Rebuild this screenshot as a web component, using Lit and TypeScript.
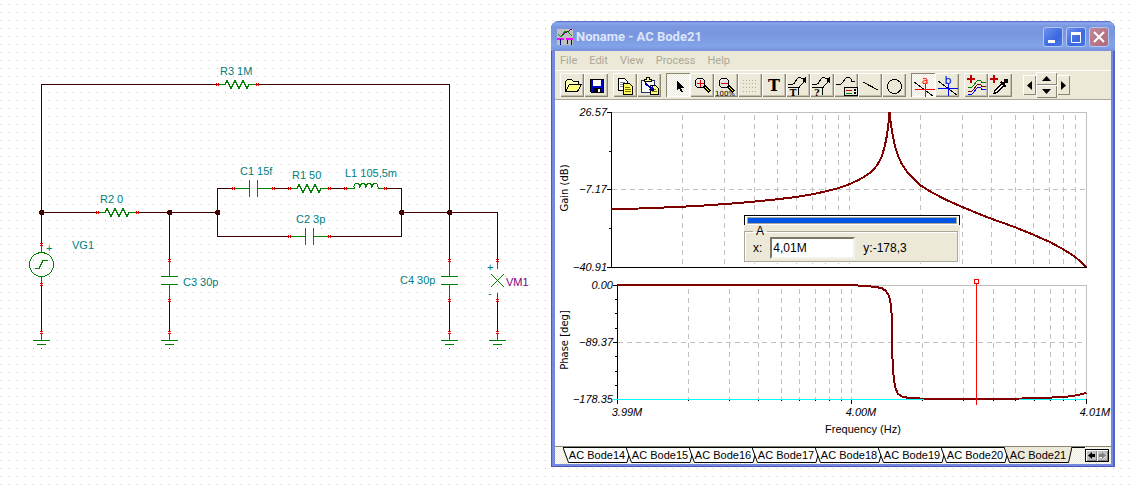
import { LitElement, html, svg, css } from "lit";
import { customElement } from "lit/decorators.js";
import { classMap } from "lit/directives/class-map.js";

/* ---------- Schematic ---------- */

const WIRES = [
  "M41.5 212V84.5H218", "M257 84.5H449.5V260", "M41.5 244V212.5H98", "M137 212.5H217.5V188.5H233",
  "M217.5 212V236.5H290", "M273 188.5H290", "M329 188.5H346", "M385 188.5H401.5V236.5H329",
  "M401.5 212.5H497.5V260", "M169.5 212V260", "M41.5 284V332", "M169.5 300V332", "M449.5 300V332", "M497.5 300V332",
];
const NODES = [[41, 212], [169, 212], [217, 212], [401, 212], [449, 212]];
const H_PINS = [[217, 84], [257, 84], [97, 212], [137, 212], [233, 188], [273, 188], [289, 188], [329, 188], [345, 188], [385, 188], [289, 236], [329, 236]];
const V_PINS = [[41, 244], [41, 284], [41, 332], [169, 260], [169, 300], [169, 332], [449, 260], [449, 300], [449, 332], [497, 260], [497, 300], [497, 332]];
const LABELS: [number, number, string][] = [
  [220, 75, "R3 1M"], [100, 203, "R2 0"], [240, 175, "C1 15f"], [292, 179, "R1 50"], [345, 177, "L1 105,5m"],
  [296, 223, "C2 3p"], [72, 249, "VG1"], [183, 286, "C3 30p"], [400, 284, "C4 30p"],
];

const resistor = (x: number, y: number) => svg`<path class="part" d="M${x} ${y + 0.5}h7l2 -4 4 8 4 -8 4 8 4 -8 4 8 2 -4h8"/>`;
const capH = (x: number, y: number) => svg`<path class="part" d="M${x} ${y + 0.5}h16.5m0 -8.500v17m8 -17v17m0 -8.500h16"/>`;
const capV = (x: number, y: number) => svg`<path class="part" d="M${x + 0.5} ${y}v16.5m-8.500 0h17m-17 8h17m-8.500 0v16"/>`;
const ground = (x: number) => svg`<path class="part" d="M${x + 0.5} 333v7.500m-8.500 0h17m-13 4h9m-5 4h1"/>`;

@customElement("circuit-schematic")
export class CircuitSchematic extends LitElement {
  static styles = css`
    :host { display: block; }
    svg { display: block; width: 100%; height: auto; shape-rendering: crispEdges; }
    .wire { fill: none; stroke: #400000; }
    .part { fill: none; stroke: #008000; }
    .pin { fill: none; stroke: #e00000; }
    .node { fill: #400000; }
    .label { font: 11px "Liberation Sans", Arial, sans-serif; fill: #008080; }
    .meter { fill: #800080; }
  `;
  render() {
    return html`<svg viewBox="0 0 540 360" role="img" aria-label="Crystal circuit schematic">
      ${WIRES.map((d) => svg`<path class="wire" d=${d}/>`)}
      ${resistor(218, 84)}${resistor(98, 212)}${resistor(290, 188)}
      ${capH(233, 188)}${capH(289, 236)}${capV(169, 260)}${capV(449, 260)}
      <path class="part" d="M346 188.500h8v-2q0 -3 3 -3 3 0 3 4q0 -4 3 -4 3 0 3 4q0 -4 3 -4 3 0 3 4q0 -4 3 -4 3 0 3 3v2h8"/>
      <circle class="part" cx="41.500" cy="264.500" r="12"/>
      <path class="part" d="M41.500 244v8.500m0 24v8M35 268.500h4l4 -8h5"/>
      <path class="part" d="M497.500 260v9m0 24v8M491 274l13 13m0 -13l-13 13"/>
      ${[41, 169, 449, 497].map(ground)}
      ${H_PINS.map(([x, y]) => svg`<path class="pin" d="M${x - 0.5} ${y - 1}v3m2 -3v3"/>`)}
      ${V_PINS.map(([x, y]) => svg`<path class="pin" d="M${x - 1} ${y - 0.5}h3m-3 2h3"/>`)}
      ${NODES.map(([x, y]) => svg`<path class="node" d="M${x - 1} ${y - 2}h3l1 1v3l-1 1h-3l-1 -1v-3z"/>`)}
      ${LABELS.map(([x, y, t]) => svg`<text class="label" x=${x} y=${y}>${t}</text>`)}
      <text class="label meter" x="506" y="286">VM1</text>
      <text class="label" x="46" y="252">+</text>
      <text class="label" x="487" y="271">+</text>
      <text class="label" x="488" y="297">-</text>
    </svg>`;
  }
}

/* ---------- Diagram ---------- */

const GAIN_COLS = [682, 724, 754, 777, 796, 812, 825, 838, 849, 920, 962, 991, 1015, 1033, 1049, 1063, 1075];
const PHASE_COLS = [688, 729, 758, 781, 799, 815, 829, 841, 851, 922, 963, 993, 1015, 1034, 1050, 1063, 1075];
const GAIN = "611,209 639,208.500 664,207.500 686,206.500 704,205.500 721,204.300 735,203.300 750,202 777,199.300 796,197 812,194.300 825,191.600 838,188.300 849,184.300 858,180.300 865,176.300 872,171.300 877,165.300 882,156.300 885,145 887,135 888.700,121 889.500,112 890.700,123 892.300,133 895,146.300 898.300,156.300 901.700,163.700 906.700,171.300 913.300,178.700 920.300,185.300 931.700,192.300 945,199.300 962.300,207 976.700,213 991.300,218.700 1015.300,227.300 1033.300,234.700 1049.300,241.700 1063.300,249.300 1075.300,257 1086.500,267";
const PHASE = "617,285 853,285 862,286 875,286.700 882,288.300 886,291 889,296 891,305 892,320 892,350 893.500,375 895,387 898,394 903,397 910,398 920,398.500 976,398.700 1022,398.500 1052,397.500 1068,396.500 1078,395 1086.500,393";

@customElement("bode-diagram")
export class BodeDiagram extends LitElement {
  static styles = css`
    :host { display: block; position: relative; background: #fff; font: 12px "Liberation Sans", Arial, sans-serif; color: #000; }
    .plot { display: block; width: 100%; height: auto; shape-rendering: crispEdges; }
    .frame { fill: none; stroke: #c0c0c0; }
    .grid { fill: none; stroke: #c0c0c0; stroke-dasharray: 5 4; }
    .axis { fill: none; stroke: #000; }
    .floor { stroke: #00ffff; }
    .curve { fill: none; stroke: #800000; stroke-width: 2; }
    .cursor { fill: #fff; stroke: #f00; }
    .tick { font-size: 11px; font-style: italic; }
    .end { text-anchor: end; }
    .mid { text-anchor: middle; }
    .caption { font-size: 11px; }
    .side { font: 10px "DejaVu Sans", Verdana, sans-serif; text-anchor: middle; }
    .popup { position: absolute; left: 189px; top: 115px; width: 216px; box-sizing: border-box; background: #ece9d8; }
    .bar { height: 5px; background: #0054e3; border: 1px solid #aca899; outline: 1px solid #fff; }
    .cap { padding: 1px 2px; border: 1px solid #000; border-bottom: 0; background: #fff; }
    .box { display: flex; align-items: center; gap: 8px; margin: 0 2px 1px 0; padding: 0 8px 2px; border: 1px solid #aca899; box-shadow: inset 1px 1px #fff, 1px 1px #fff; }
    .box legend { padding: 0 3px; line-height: 12px; }
    .field { display: flex; align-items: center; gap: 8px; }
    .value { width: 85px; height: 22px; box-sizing: border-box; padding: 0 1px; font: inherit; background: #fff; border: 2px solid; border-color: #7b7868 #f4f2e8 #f4f2e8 #7b7868; border-radius: 0; }
  `;
  render() {
    return html`
      <svg class="plot" viewBox="555 100 556 346" role="img" aria-label="Gain and phase against frequency">
        <path class="grid" d=${GAIN_COLS.map((x) => `M${x + 0.5} 115V267`).join("") + "M612 189.5H1086"}/>
        <path class="grid" d=${PHASE_COLS.map((x) => `M${x + 0.5} 289V399`).join("") + "M618 342.5H1086"}/>
        <path class="frame" d="M612 112.500H1086.500V267M618 285.500H1086.500V399"/>
        <path class="axis" d="M611.500 112V267.500H1087M607 112.500h4M607 189.500h4M607 267.500h4M609 151.500h2M609 228.500h2"/>
        <path class="axis" d="M617.500 285V404M613 285.500h4M613 342.500h4M615 299.500h2M615 313.500h2M615 328.500h2M615 356.500h2M615 371.500h2M615 385.500h2M851.500 399v5M1086.500 399v5"/>
        <path class="axis" d=${PHASE_COLS.map((x) => `M${x + 0.5} 399v2`).join("")}/>
        <path class="axis floor" d="M613 399.500H1086"/>
        <polyline class="curve" points=${GAIN}/>
        <polyline class="curve" points=${PHASE}/>
        <path class="cursor" d="M976.500 284V405M974.500 279.500h4v4h-4z"/>
        <g class="tick end">
          <text x="607" y="116">26.57</text><text x="607" y="193">−7.17</text><text x="607" y="271">−40.91</text>
          <text x="613" y="289">0.00</text><text x="613" y="346">−89.37</text><text x="613" y="403">−178.35</text>
        </g>
        <g class="tick mid">
          <text x="627" y="416">3.99M</text><text x="861" y="416">4.00M</text><text x="1095" y="416">4.01M</text>
        </g>
        <text class="caption mid" x="863" y="433">Frequency (Hz)</text>
        <text class="side" transform="translate(568 188) rotate(-90)">Gain (dB)</text>
        <text class="side" transform="translate(568 340) rotate(-90)">Phase [deg]</text>
      </svg>
      <div class="popup">
        <div class="cap"><div class="bar"></div></div>
        <fieldset class="box">
          <legend>A</legend>
          <label class="field">x: <input class="value" value="4,01M" /></label>
          <output>y:-178,3</output>
        </fieldset>
      </div>
    `;
  }
}

/* ---------- Toolbar icons, drawn on a 24 px button face ---------- */

const lens = (cx: number, sign: unknown) => svg`
  <circle cx=${cx} cy="10" r="5" fill="#e4e4e4" stroke="#000"/><path d="M${cx - 3} 8l2 -2" stroke="#fff"/>${sign}
  <path d="M${cx + 4} 13l6 6" stroke="#000" stroke-width="3"/><path d="M${cx + 5} 14l4 4" stroke="#ff0"/>`;
const wave = svg`<path d="M2 11.500h3q3 0 5 -4t4 -3q3 0 4 4h3" stroke="#000"/>`;
const waveArrow = (t: string) => svg`
  <path d="M2 11.500h4q2 0 4 -4t4 -3 3 1 3 -1" stroke="#000"/>
  <path d="M12.500 15l6 -7" stroke="#000"/><path d="M20 5v5l-4 -3z" fill="#000"/>
  <path d="M2 14.500H13M12.500 14v8" stroke="#000"/><text x="7" y="23" class="tiny">${t}</text>`;

const ICONS: Record<string, unknown> = {
  Open: svg`<path d="M5.500 18.500V8.500l2 -2h4l2 2h5v3" fill="#ffffb0" stroke="#000"/><path d="M5.500 18.500l4 -7h12l-4 7z" fill="#ffff80" stroke="#000"/>`,
  Save: svg`<path d="M6.500 6.500h13v13h-12l-1 -1z" fill="#0000c8" stroke="#000"/><path d="M9 7h8v6H9z" fill="#fff"/><path d="M9 15h8v4H9z" fill="#000"/><path d="M14 16h2v3h-2z" fill="#fff"/>`,
  Copy: svg`<path d="M5.500 5.500h6l3 3v9h-9z" fill="#fff" stroke="#000"/><path d="M7 9.500h5M7 11.500h5M7 13.500h4" stroke="#888"/><path d="M10.500 10.500h6l3 3v8h-9z" fill="#ffff60" stroke="#000"/><path d="M12 14.500h5M12 16.500h6M12 18.500h6" stroke="#807000"/>`,
  Paste: svg`<path d="M4.500 7.500h13v12h-13z" fill="#fff" stroke="#223060"/><path d="M7.500 8.500v-2h2v-2h3v2h2v2z" fill="#ffff80" stroke="#000"/><path d="M13.500 12.500h5l3 3v6h-8z" fill="#ffff80" stroke="#000"/><path d="M15 16.500h4M15 18.500h5" stroke="#807000"/><path d="M8 10l7 6" stroke="#0000a0" stroke-width="2"/><path d="M17 18l-1 -6 -5 5z" fill="#0000a0"/>`,
  Pointer: svg`<path d="M11 8v9l2 -2 2 4h2l-2 -4h3z" fill="#000"/>`,
  "Zoom in": lens(10, svg`<path d="M7 10.500h7M10.500 7v7" stroke="#e00000"/>`),
  "Zoom 100%": svg`${lens(10, svg`<path d="M7 10.500h7" stroke="#e00000"/>`)}<text x="11" y="23" class="pct">100%</text>`,
  Grid: svg`<path d="M5 7.500h14M5 10.500h14M5 14.500h14M5 18.500h14" stroke="#b4b09c" stroke-dasharray="1 2"/>`,
  Text: svg`<text x="12" y="18" class="big">T</text>`,
  "Text marker": waveArrow("T"),
  "Value marker": waveArrow("?"),
  Legend: svg`${wave}<path d="M10.500 14.500h13v8h-13z" fill="#ece9d8" stroke="#000"/><path d="M12 17.500h6" stroke="#c00000"/><path d="M12 20.500h6" stroke="#008000"/><path d="M20 16l2 2m0 -2l-2 2m0 1l2 2m0 -2l-2 2" stroke="#000"/>`,
  Line: svg`<path d="M5 9l15 8" stroke="#000"/>`,
  Circle: svg`<circle cx="12.500" cy="13.500" r="7" stroke="#000"/>`,
  "Cursor a": svg`<path d="M3 9l19 14" stroke="#000"/><path d="M4 16.500h20M14.500 11v13" stroke="#f00"/><text x="14" y="11" class="cur red">a</text>`,
  "Cursor b": svg`<path d="M3 8l19 14" stroke="#000"/><path d="M3 15.500h20M13.500 11v12" stroke="#00f"/><text x="13" y="11" class="cur blue">b</text>`,
  "Add curves": svg`<path d="M3 6h8M7 2v8" stroke="#c00000" stroke-width="2"/><path d="M4 14.500h2q3 0 5 -4t4 -3q2 0 3 2h4" stroke="#008000"/><path d="M4 18.500h2q3 0 5 -4t4 -3q2 0 3 2h4" stroke="#800000"/><path d="M4 21.500h2q3 0 5 -4t4 -3q2 0 3 2h4" stroke="#00f"/>`,
  "Pick value": svg`<path d="M2 6h8M6 2v8" stroke="#c00000" stroke-width="2"/><path d="M6 20.500l1 -3 7 -7 2 2 -7 7z" fill="#fff" stroke="#000"/><path d="M13 9l5 5M15 11l4 -4" stroke="#000" stroke-width="2"/><circle cx="18" cy="8" r="2.500" fill="#000"/>`,
};
const GROUPS = [
  ["Open", "Save"], ["Copy", "Paste"],
  ["Pointer", "Zoom in", "Zoom 100%", "Grid", "Text", "Text marker", "Value marker", "Legend", "Line", "Circle"],
  ["Cursor a", "Cursor b"], ["Add curves", "Pick value"],
];
const PRESSED = ["Pointer", "Cursor a"];
const TABS = [14, 15, 16, 17, 18, 19, 20, 21].map((n) => `AC Bode${n}`);

@customElement("bode-window")
export class BodeWindow extends LitElement {
  static styles = css`
    :host { display: block; }
    button { margin: 0; padding: 0; border: 0; background: none; font: inherit; color: inherit; }
    svg { display: block; fill: none; }
    .window { padding: 0 4px 3px; border-radius: 8px 8px 0 0; background: #7589e0; box-shadow: inset 1px -1px #4a58bc, inset -2px 0 #5562c8; font: 11px "Liberation Sans", Arial, sans-serif; color: #000; }
    .title { display: flex; align-items: center; gap: 3px; height: 30px; margin: 0 -4px; padding: 0 6px; border-radius: 8px 8px 0 0; background: linear-gradient(#5068c8 0, #8ea9ee 2px, #7b97e0 5px, #7a96df 14px, #82a4e8 25px, #7890dc 30px); }
    .name { flex: 1; margin: 0; font: bold 13px/30px Roboto, "Trebuchet MS", sans-serif; color: #dce6fb; white-space: nowrap; padding-top: 2px; }
    .logo { margin-top: 2px; }
    .controls { display: flex; gap: 3px; padding-top: 2px; }
    .ctl { width: 20px; height: 20px; box-sizing: border-box; border: 1px solid #b4c6f4; border-radius: 3px; background: linear-gradient(135deg, #6c92f0, #3c68e0 60%, #4478ec); }
    .close { background: linear-gradient(135deg, #c08898, #b06a78); }
    .menu { display: flex; gap: 12px; height: 19px; padding: 0 5px; background: #ece9d8; border-bottom: 1px solid #fff; line-height: 18px; color: #aca899; font-family: Roboto, Tahoma, sans-serif; }
    .tools { display: flex; align-items: center; gap: 5px; height: 28px; padding: 0 5px; background: #ece9d8; border-bottom: 1px solid #aca899; }
    .group { display: flex; }
    .tool { width: 24px; height: 24px; box-shadow: inset 1px 1px #fff, inset -1px -1px #8a8775, inset -2px -2px #c4c0ac; }
    .tool svg { width: 24px; height: 24px; shape-rendering: crispEdges; }
    .down { background: repeating-conic-gradient(#ece9d8 0 25%, #fff 0 50%) 0 0 / 2px 2px; box-shadow: inset 1px 1px #8a8775, inset -1px -1px #fff; }
    .pad { display: flex; align-items: center; margin-left: 6px; }
    .pad button { display: grid; place-items: center; box-shadow: inset 1px 1px #fff, inset -1px -1px #8a8775; }
    .lr { width: 13px; height: 20px; }
    .ud { width: 21px; height: 13px; }
    .tiny { font: bold 9px "DejaVu Serif", serif; fill: #000; text-anchor: middle; }
    .pct { font: 7px "DejaVu Sans", sans-serif; fill: #000; text-anchor: middle; }
    .big { font: bold 16px "DejaVu Serif", serif; fill: #000; text-anchor: middle; }
    .cur { font: 11px "DejaVu Sans", sans-serif; text-anchor: middle; }
    .red { fill: #f00; }
    .blue { fill: #00f; }
    .strip { display: flex; align-items: center; height: 18px; box-sizing: border-box; padding: 0 2px 0 8px; border-top: 1px solid #8a8775; background: repeating-conic-gradient(#ece9d8 0 25%, #fff 0 50%) 0 0 / 2px 2px; }
    .tabs { display: flex; flex: 1; align-self: flex-start; box-shadow: inset 0 1px #000; }
    .tab { display: grid; width: 68px; height: 16px; margin-right: -5px; line-height: 16px; text-align: center; isolation: isolate; }
    .tab > * { grid-area: 1 / 1; }
    .shape { fill: #fff; stroke: #000; }
    .active { position: relative; z-index: 1; }
    .active .shape { fill: #ece9d8; }
    .scroll { display: flex; border: 1px solid #000; background: #c0c0c0; }
    .scroll button { display: grid; place-items: center; width: 11px; height: 11px; box-shadow: inset 1px 1px #fff, inset -1px -1px #808080; }
  `;
  render() {
    return html`<section class="window">
      <header class="title">
        <svg class="logo" width="16" height="16" shape-rendering="crispEdges"><path fill="#c0c0c0" d="M0 0h16v16H0z"/><path stroke="#00a000" d="M1 5l3 3 4 -6 3 1 4 4"/><path stroke="#600060" d="M5 6l5 -3 5 -3"/><path stroke="#f0f" stroke-width="2" d="M0 10h7M9 10h7"/><path stroke="#000080" d="M3.500 10v6M10.500 11v4M14.500 11v5"/></svg>
        <h1 class="name">Noname - AC Bode21</h1>
        <div class="controls">
          <button class="ctl" aria-label="Minimize"><svg width="18" height="18"><path fill="#fff" d="M4 12h7v3H4z"/></svg></button>
          <button class="ctl" aria-label="Maximize"><svg width="18" height="18"><path stroke="#fff" d="M4.500 4v10.500h9V4"/><path fill="#fff" d="M4 4h10v3H4z"/></svg></button>
          <button class="ctl close" aria-label="Close"><svg width="18" height="18"><path stroke="#fff" stroke-width="2" d="M4 4l10 10m0 -10l-10 10"/></svg></button>
        </div>
      </header>
      <nav class="menu">${["File", "Edit", "View", "Process", "Help"].map((m) => html`<button>${m}</button>`)}</nav>
      <div class="tools">
        ${GROUPS.map((g) => html`<div class="group">${g.map((n) => html`
          <button class=${classMap({ tool: true, down: PRESSED.includes(n) })} aria-label=${n}><svg viewBox="0 0 24 24">${ICONS[n]}</svg></button>`)}</div>`)}
        <div class="pad">
          <button class="lr" aria-label="Left"><svg width="5" height="9"><path fill="#000" d="M5 0v9L0 4.500z"/></svg></button>
          <div>
            <button class="ud" aria-label="Up"><svg width="9" height="5"><path fill="#000" d="M0 5h9L4.500 0z"/></svg></button>
            <button class="ud" aria-label="Down"><svg width="9" height="5"><path fill="#000" d="M0 0h9L4.500 5z"/></svg></button>
          </div>
          <button class="lr" aria-label="Right"><svg width="5" height="9"><path fill="#000" d="M0 0v9l5 -4.500z"/></svg></button>
        </div>
      </div>
      <bode-diagram></bode-diagram>
      <footer class="strip">
        <div class="tabs">${TABS.map((t, i) => {
          const on = i === TABS.length - 1;
          return html`<button class=${classMap({ tab: true, active: on })}>
            <svg width="68" height="16"><path class="shape" d=${on ? "M0 0l5.5 15.5h59L68 0" : "M0 .5l5.5 15h58.500L68 .5z"}/></svg><span>${t}</span></button>`;
        })}</div>
        <div class="scroll">
          <button aria-label="Previous tabs"><svg width="7" height="7"><path fill="#000" d="M4 0v2h3v3H4v2L0 3.500z"/></svg></button>
          <button aria-label="Next tabs"><svg width="7" height="7"><path fill="#fff" d="M4 1v2H1v3h3v1l3 -3z"/><path fill="#808080" d="M3 0v2H0v3h3v2l4 -3.500z"/></svg></button>
        </div>
      </footer>
    </section>`;
  }
}

@customElement("app-root")
export class AppRoot extends LitElement {
  static styles = css`
    :host { display: block; }
    .desk {
      display: flex; align-items: flex-start; min-height: 100vh; box-sizing: border-box; padding-right: 19px;
      background-color: #fff;
      background-image: linear-gradient(to right, transparent 1px, #fff 1px), linear-gradient(#c0c0c0 1px, #fff 1px);
      background-size: 8px 8px; background-position: 1px 4px;
    }
    .left { flex: 0 0 540px; }
    .right { flex: 1; min-width: 0; margin: 21px 0 0 11px; }
  `;
  render() {
    return html`<main class="desk">
      <circuit-schematic class="left"></circuit-schematic>
      <bode-window class="right"></bode-window>
    </main>`;
  }
}
